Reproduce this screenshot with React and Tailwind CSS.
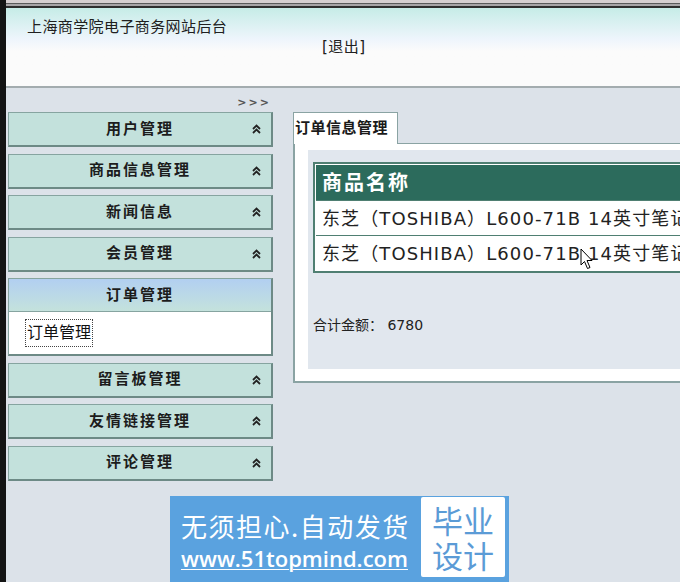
import { Fragment } from "react";

const FONT = { fontFamily: "'DejaVu Sans', 'Noto Sans CJK SC', sans-serif" };
const CJK = { fontFamily: "'Noto Sans CJK SC', sans-serif" };

const MENU_TOP = ["用户管理", "商品信息管理", "新闻信息", "会员管理"];
const MENU_BOTTOM = ["留言板管理", "友情链接管理", "评论管理"];
const ROWS = [
  "东芝（TOSHIBA）L600-71B 14英寸笔记本电脑",
  "东芝（TOSHIBA）L600-71B 14英寸笔记本电脑",
];

const DoubleUp = () => (
  <svg width="9" height="10" viewBox="0 0 9 10" fill="none" stroke="#222" strokeWidth="1.8">
    <path d="M1 5 L4.5 1.5 L8 5" />
    <path d="M1 9 L4.5 5.5 L8 9" />
  </svg>
);

const MenuItem = ({ label }) => (
  <div className="relative h-[35px] flex items-center justify-center bg-[#c3e1dc] border border-[#86a4a0] border-r-2 border-b-2 border-r-[#6d8a86] border-b-[#6d8a86]">
    <span className="text-[15px] font-bold tracking-[2px] text-[#1c1c1c]">{label}</span>
    <span className="absolute right-[10px] top-[11px]">
      <DoubleUp />
    </span>
  </div>
);

const App = () => {
  return (
    <div className="relative w-[680px] h-[582px] flex overflow-hidden bg-[#dce2e9]" style={FONT}>
      {/* window edge */}
      <div className="w-[6px] h-full shrink-0 bg-[#141414]" />

      <div className="flex-1 flex flex-col min-w-0">
        {/* top chrome */}
        <div className="shrink-0">
          <div className="h-[3px] bg-[#d6cfd0]" />
          <div className="h-[1px] bg-[#5a5a5a]" />
          <div className="h-[2px] bg-[#a7a4a6]" />
          <div className="h-[2px] bg-[#2e2e2e]" />
        </div>

        {/* header */}
        <div className="h-[80px] shrink-0 bg-linear-to-b from-[#c6ece7] via-[#eef5fc] via-40% to-[#fbfbfb] to-55% border-b-2 border-[#a3acaf] relative">
          <div className="absolute left-[21px] top-[8px] text-[15px] tracking-[0.4px] text-[#202020]">
            上海商学院电子商务网站后台
          </div>
          <div className="absolute left-[316px] top-[28px] text-[15px] tracking-[0.5px] text-[#202020]">[退出]</div>
        </div>

        {/* body */}
        <div className="flex flex-1 min-h-0">
          {/* sidebar */}
          <div className="w-[287px] shrink-0 pl-[2px] pr-[20px]">
            <div className="h-[24px] flex items-end justify-end pr-[2px] pb-[1px]">
              <span className="text-[11px] font-bold tracking-[2px] text-[#555]">&gt;&gt;&gt;</span>
            </div>
            <div className="flex flex-col gap-[6.5px]">
              {MENU_TOP.map((m) => (
                <MenuItem key={m} label={m} />
              ))}
              <div className="flex flex-col border border-[#86a4a0] border-r-2 border-b-2 border-r-[#6d8a86] border-b-[#6d8a86]">
                <div className="h-[33px] flex items-center justify-center bg-linear-to-b from-[#b2cff1] to-[#c4e2dc] border-b border-[#86a4a0]">
                  <span className="text-[15px] font-bold tracking-[2px] text-[#1c1c1c]">订单管理</span>
                </div>
                <div className="h-[42px] bg-white flex items-center pl-[17px]">
                  <span className="text-[16px] text-[#111] outline-1 outline-dotted outline-[#444] px-[1px] leading-[26px]">
                    订单管理
                  </span>
                </div>
              </div>
              {MENU_BOTTOM.map((m) => (
                <MenuItem key={m} label={m} />
              ))}
            </div>
          </div>

          {/* main */}
          <div className="flex-1 min-w-0 pt-[24px]">
            <div className="flex">
              <div className="w-[105px] h-[32px] bg-white border border-[#8aa3a3] border-b-0 flex items-center pl-[1px] relative z-10">
                <span className="text-[15px] font-bold tracking-[0.5px] text-[#1a1a1a]">订单信息管理</span>
              </div>
            </div>
            <div className="-mt-px w-[420px] h-[240px] bg-white border-l-2 border-t border-b-2 border-[#8aa3a3] pl-[13px] pt-[6px] pb-[12px]">
              <div className="h-full bg-[#e1e7ee] pl-[5px] pt-[12px]">
                <div className="w-[420px] border-2 border-double border-[#4f7f72] bg-white p-px">
                  <div className="h-[35px] bg-[#2c6b5c] flex items-center pl-[6px]">
                    <span className="text-[20px] font-bold text-white tracking-[2px]">商品名称</span>
                  </div>
                  {ROWS.map((r, i) => (
                    <Fragment key={i}>
                      <div className="h-[35px] flex items-center pl-[6px] border-t border-[#4f7f72] whitespace-nowrap overflow-hidden">
                        <span className="text-[18px] tracking-[1.1px] text-[#222]">{r}</span>
                      </div>
                    </Fragment>
                  ))}
                </div>
                <div className="mt-[42px] text-[14px] text-[#222]">合计金额：&nbsp;6780</div>
              </div>
            </div>
          </div>
        </div>
      </div>

      {/* mouse pointer */}
      <svg className="absolute left-[580px] top-[248px]" width="13" height="22" viewBox="0 0 13 22">
        <path d="M1 1 L1 17 L4.5 13.5 L7.5 20.5 L10 19.5 L7 12.5 L12 12.5 Z" fill="#fff" stroke="#000" strokeWidth="1" />
      </svg>

      {/* watermark banner */}
      <div className="absolute left-[170px] top-[496px] w-[339px] h-[86px] bg-[#5aa2df] flex">
        <div className="flex-1 flex flex-col items-start pl-[11px] pt-[13px]">
          <span className="text-[26px] leading-[34px] text-white tracking-[1.5px]" style={CJK}>
            无须担心.自动发货
          </span>
          <span className="text-[22px] leading-[30px] font-semibold text-white underline decoration-1 underline-offset-2" style={{ fontFamily: "'Open Sans', sans-serif" }}>
            www.51topmind.com
          </span>
        </div>
        <div className="w-[84px] h-[80px] mt-[1px] mr-[4px] bg-white rounded-[2px] flex items-center justify-center">
          <span className="text-[31px] leading-[35px] text-[#5b9bd6] text-center" style={CJK}>
            毕业
            <br />
            设计
          </span>
        </div>
      </div>
    </div>
  );
};

export default App;
